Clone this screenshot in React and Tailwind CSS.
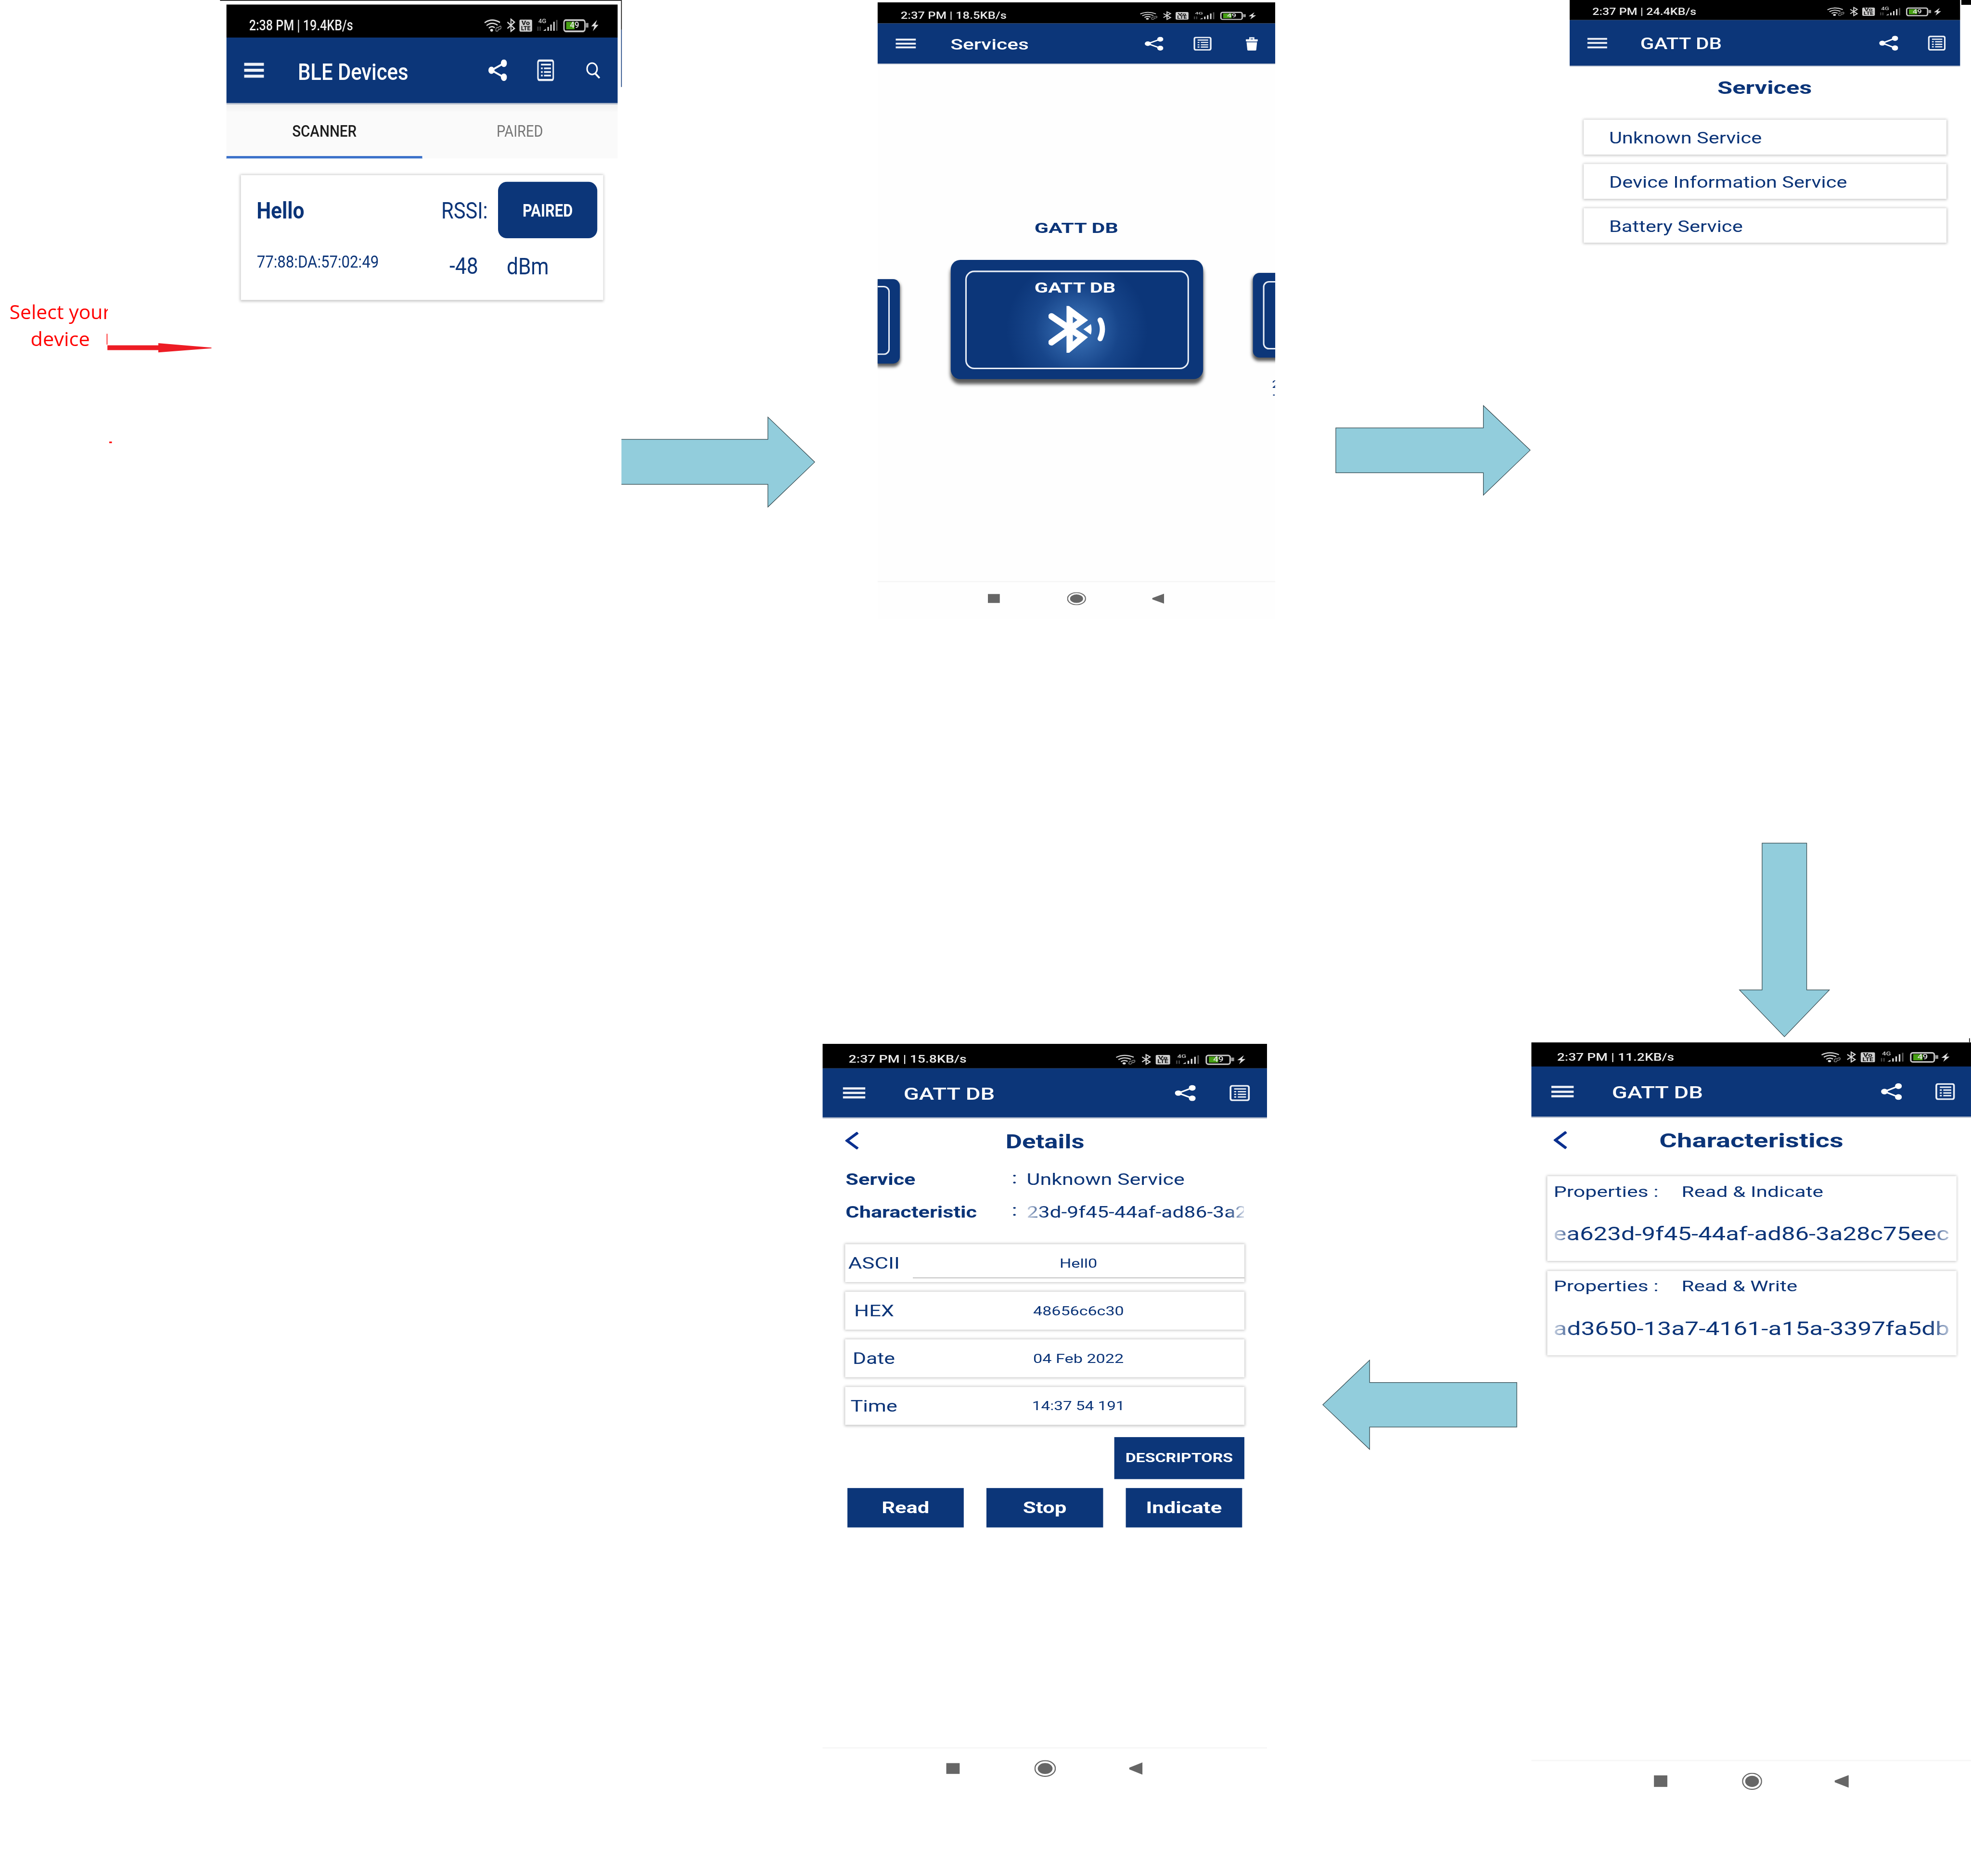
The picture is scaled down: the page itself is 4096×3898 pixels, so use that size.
import React, { useLayoutEffect, useRef, useState } from "react";

/* One line of text, stretched horizontally so that its ink fills the width of its box. */
function Fit({ className = "", children }) {
  const box = useRef(null);
  const line = useRef(null);
  const [fit, setFit] = useState({ ratio: 1, shift: 0 });
  useLayoutEffect(() => {
    const size = parseFloat(getComputedStyle(line.current).fontSize);
    const ratio = box.current.clientWidth / (line.current.offsetWidth - size * 0.08);
    setFit({ ratio, shift: -size * 0.05 * ratio });
  }, [children]);
  return (
    <div ref={box} className={"shrink-0 " + className}>
      <span
        ref={line}
        className="block w-max origin-left whitespace-pre"
        style={{ transform: `translateX(${fit.shift}px) scaleX(${fit.ratio})` }}
      >
        {children}
      </span>
    </div>
  );
}

function StatusIcons({ className }) {
  return (
    <svg className={className} viewBox="0 0 1040 94" preserveAspectRatio="none" fill="none">
      <g stroke="#d6d6d6" strokeWidth="9">
        <path d="M6 30Q70 -4 146 28" />
        <path d="M24 49Q70 20 124 46" />
        <path d="M44 66Q70 48 98 63" />
      </g>
      <ellipse cx="70" cy="80" rx="13" ry="9" fill="#e2e2e2" />
      <path d="M108 84q-4-26 22-22q26-18 26 0q-2 12-24 12q-4 18-24 10z" stroke="#7d7d7d" strokeWidth="7" />
      <path d="M213 26L277 68L245 87V7L277 26L213 68" stroke="#d6d6d6" strokeWidth="9" />
      <rect x="322" y="9" width="115" height="80" rx="10" fill="#cfcfcf" />
      <text x="379" y="44" textAnchor="middle" textLength="76" lengthAdjust="spacingAndGlyphs" fontFamily="Roboto" fontWeight="900" fontSize="40" fill="#222">Vo</text>
      <text x="379" y="80" textAnchor="middle" textLength="86" lengthAdjust="spacingAndGlyphs" fontFamily="Roboto" fontWeight="900" fontSize="42" fill="#222">LTE</text>
      <text x="494" y="33" textLength="72" lengthAdjust="spacingAndGlyphs" fontFamily="Roboto" fontWeight="500" fontSize="40" fill="#d0d0d0">4G</text>
      <path d="M490 56v28M510 56v28" stroke="#4a4a4a" strokeWidth="10" />
      <path d="M538 84L562 70V84zM576 84V58h13v26zM602 84V42h13v42zM629 84V24h13v60z" fill="#d9d9d9" />
      <path d="M655 84V12h12v72z" fill="#5a5a5a" />
      <rect x="726" y="13" width="190" height="74" rx="16" stroke="#c8c8c8" strokeWidth="12" />
      <rect x="746" y="24" width="76" height="50" fill="#46a013" />
      <path d="M924 32h24v30h-24z" fill="#9a9a9a" />
      <text x="780" y="66" textLength="84" lengthAdjust="spacingAndGlyphs" fontFamily="Roboto" fontWeight="500" fontSize="56" fill="#e4e4e4">49</text>
      <path d="M1026 12L973 54H1002L988 86L1039 44H1010z" fill="#dedede" />
    </svg>
  );
}

function ShareIcon({ className }) {
  return (
    <svg className={className} viewBox="0 0 170 138" preserveAspectRatio="none">
      <path d="M142 24L28 69L142 114" fill="none" stroke="#fff" strokeWidth="13" />
      <ellipse cx="28" cy="69" rx="28" ry="23" fill="#fff" />
      <ellipse cx="142" cy="24" rx="28" ry="24" fill="#fff" />
      <ellipse cx="142" cy="114" rx="28" ry="24" fill="#fff" />
    </svg>
  );
}

function ListIcon({ className }) {
  return (
    <svg className={className} viewBox="0 0 158 134" preserveAspectRatio="none" fill="none" stroke="#eef2f8">
      <rect x="8" y="6" width="142" height="122" rx="14" strokeWidth="14" />
      <path strokeWidth="11" d="M36 32H128M36 55h16M64 55h64M36 78h16M64 78h64M36 100h16M64 100h64" />
    </svg>
  );
}

function SearchIcon({ className }) {
  return (
    <svg className={className} viewBox="0 0 38 44" preserveAspectRatio="none" fill="none" stroke="#fff">
      <ellipse cx="16" cy="18" rx="13.5" ry="15.5" strokeWidth="4" />
      <path d="M24 30L36 43" strokeWidth="5" />
    </svg>
  );
}

function TrashIcon({ className }) {
  return (
    <svg className={className} viewBox="0 0 34 37" preserveAspectRatio="none">
      <path d="M12 8V3h10v5" fill="none" stroke="#e6ebf3" strokeWidth="4" />
      <path d="M1 7h32v5H1z" fill="#fff" />
      <path d="M3 13h28v3H3z" fill="#a9b8d2" />
      <path d="M3 16h28L29 35q0 2-3 2H8q-3 0-3-2z" fill="#fff" />
    </svg>
  );
}

function Burger({ className, bar }) {
  return (
    <div className={"ml-[4.6%] flex w-[5%] shrink-0 flex-col justify-between " + className}>
      <div className={"bg-[#eef1f7] " + bar} />
      <div className={"bg-[#eef1f7] " + bar} />
      <div className={"bg-[#eef1f7] " + bar} />
    </div>
  );
}

function StatusBar({ className, time, timeClass, iconsClass }) {
  return (
    <div className={"flex shrink-0 items-center bg-black " + className}>
      <Fit className={"ml-[6%] w-[26.35%] font-medium text-[#ececec] " + timeClass}>{time}</Fit>
      <StatusIcons className={"ml-[33.5%] w-[29.3%] shrink-0 " + iconsClass} />
    </div>
  );
}

function BackButton({ className }) {
  return (
    <svg className={"shrink-0 " + className} viewBox="0 0 37 48" preserveAspectRatio="none">
      <path d="M34 2L5 24L34 46" fill="none" stroke="#0a2f8f" strokeWidth="7.5" />
    </svg>
  );
}

function NavBar({ className, square, circle, triangle }) {
  return (
    <div className={"flex w-full items-center " + className}>
      <div className={"shrink-0 bg-[#666] " + square} />
      <svg className={"shrink-0 " + circle} viewBox="0 0 54 46" preserveAspectRatio="none">
        <ellipse cx="27" cy="23" rx="25.5" ry="21.5" fill="none" stroke="#666" strokeWidth="3" />
        <ellipse cx="27" cy="23" rx="18.5" ry="15" fill="#666" />
      </svg>
      <svg className={"shrink-0 " + triangle} viewBox="0 0 36 32" preserveAspectRatio="none">
        <path d="M36 0V32L0 18V14z" fill="#666" />
      </svg>
    </div>
  );
}

const card = "bg-white shadow-[0_1px_7px_2px_rgba(0,0,0,0.25)]";

function BleDevices() {
  return (
    <section className="absolute left-[609px] top-[12px] flex h-[860px] w-[1053px] flex-col overflow-hidden bg-white">
      <StatusBar className="h-[89px] pt-[22px]" time="2:38 PM | 19.4KB/s" timeClass="text-[41px] leading-[29px]" iconsClass="h-[38px]" />
      <div className="flex h-[176px] shrink-0 items-center bg-[#0c3679]">
        <Burger className="h-[40px]" bar="h-[8px]" />
        <Fit className="ml-[94px] mt-[8px] w-[293px] text-[63px] font-medium leading-[45px] text-white">BLE Devices</Fit>
        <ShareIcon className="ml-[217px] h-[58px] w-[50px]" />
        <ListIcon className="ml-[81px] h-[58px] w-[46px]" />
        <SearchIcon className="ml-[86px] h-[44px] w-[38px]" />
      </div>
      <div className="h-[4px] shrink-0 bg-[#b4bccb]" />
      <div className="flex h-[145px] shrink-0 bg-gradient-to-b from-[#f0f0f0] to-[#fafafa] to-15%">
        <div className="flex w-[527px] justify-center pt-[58px]">
          <Fit className="w-[170px] text-[42px] font-medium leading-[30px] text-[#1c1c1c]">SCANNER</Fit>
        </div>
        <div className="flex flex-1 justify-center pt-[58px]">
          <Fit className="w-[122px] text-[42px] leading-[30px] text-[#757575]">PAIRED</Fit>
        </div>
      </div>
      <div className="-mt-[6px] h-[7px] w-[527px] shrink-0 border-b-2 border-[#a9c3ea] bg-[#2a65c5]" />
      <div className={"ml-[39px] mt-[44px] flex h-[336px] w-[975px] shrink-0 text-[#0b3478] " + card}>
        <div className="ml-[45px] w-[497px]">
          <Fit className="mt-[74px] w-[124px] text-[62px] font-bold leading-[44px]">Hello</Fit>
          <Fit className="mt-[99px] w-[325px] text-[46px] leading-[33px]">77:88:DA:57:02:49</Fit>
        </div>
        <div className="w-[150px]">
          <Fit className="mt-[74px] w-[121px] text-[62px] leading-[44px]">RSSI:</Fit>
          <Fit className="ml-[22px] mt-[105px] w-[73px] text-[62px] leading-[44px]">-48</Fit>
        </div>
        <div>
          <button className="mt-[18px] flex h-[152px] w-[267px] items-center justify-center rounded-[24px] bg-[#0c3679]">
            <Fit className="w-[132px] text-[49px] font-bold leading-[35px] text-white">PAIRED</Fit>
          </button>
          <Fit className="ml-[26px] mt-[54px] w-[109px] text-[62px] leading-[44px]">dBm</Fit>
        </div>
      </div>
    </section>
  );
}

function SideCard({ className, inner }) {
  return (
    <div className={"shrink-0 bg-[#0c3679] shadow-[0_7px_8px_1px_rgba(0,0,0,0.65)] " + className}>
      <div className={"border-[4px] border-[#e9eef6] " + inner} />
    </div>
  );
}

function Services() {
  return (
    <section className="absolute left-[2361px] top-[6px] flex h-[1660px] w-[1070px] flex-col overflow-hidden bg-[#fefefe]">
      <StatusBar className="h-[57px] pt-[15px]" time="2:37 PM | 18.5KB/s" timeClass="text-[26px] leading-[18px]" iconsClass="h-[24px]" />
      <div className="flex h-[108px] shrink-0 items-center bg-[#0c3679]">
        <Burger className="h-[26px]" bar="h-[5px]" />
        <Fit className="ml-[96px] mt-[6px] w-[206px] text-[39.5px] font-medium leading-[28px] text-white">Services</Fit>
        <ShareIcon className="ml-[314px] h-[37px] w-[50px]" />
        <ListIcon className="ml-[81px] h-[37px] w-[49px]" />
        <TrashIcon className="ml-[91px] h-[37px] w-[34px]" />
      </div>
      <div className="h-[2px] shrink-0 bg-[#b4bccb]" />
      <Fit className="ml-[425px] mt-[428px] w-[221px] text-[38px] font-bold leading-[27px] text-[#0b3478]">GATT DB</Fit>
      <div className="mt-[71px] flex h-[321px] shrink-0">
        <SideCard className="mt-[52px] h-[227px] w-[60px] rounded-r-[18px] pt-[18px]" inner="h-[186px] w-[33px] rounded-r-[16px] border-l-0" />
        <div className="ml-[137px] flex h-[321px] w-[679px] shrink-0 flex-col items-center rounded-[26px] bg-[#0c3679] pt-[29px] shadow-[0_12px_10px_1px_rgba(0,0,0,0.65)]">
          <div className="flex h-[265px] w-[602px] flex-col items-center rounded-[24px] border-[4px] border-[#e9eef6] bg-[radial-gradient(circle_190px_at_50%_60%,#3d74b8_0%,#2f63a8_25%,#17458a_60%,#0c3679_100%)] pt-[29px]">
            <Fit className="mr-[9px] w-[214px] text-[38px] font-bold leading-[27px] text-white">GATT DB</Fit>
            <svg className="mt-[35px] h-[126px] w-[153px]" viewBox="0 0 153 126">
              <path d="M8 28L92 85L57 114V12L92 38L8 98" fill="none" stroke="#fff" strokeWidth="17" strokeLinecap="round" />
              <path d="M94 63L114 49Q118 63 114 77z" fill="#fff" />
              <path d="M139 38Q151 62 139 88" fill="none" stroke="#fff" strokeWidth="14" strokeLinecap="round" />
            </svg>
          </div>
        </div>
        <div className="ml-[134px] shrink-0">
          <SideCard className="mt-[35px] h-[228px] w-[90px] rounded-l-[18px] pl-[27px] pt-[22px]" inner="h-[184px] w-[80px] rounded-l-[16px]" />
        </div>
      </div>
      <div className="mt-[4px] h-[44px] shrink-0 pl-[1063px] text-[#0b3478]">
        <Fit className="w-[20px] text-[28px] leading-[20px]">2</Fit>
        <Fit className="mt-[1px] w-[8px] text-[28px] leading-[20px]">.</Fit>
      </div>
      <div className="mt-[495px] h-[3px] shrink-0 bg-[#f5f5f5]" />
      <NavBar className="h-[88px]" square="ml-[297px] h-[24px] w-[32px]" circle="ml-[181px] h-[35px] w-[51px]" triangle="ml-[178px] h-[27px] w-[32px]" />
    </section>
  );
}

function GattServices() {
  return (
    <section className="absolute left-[4223px] top-0 flex h-[700px] w-[1051px] flex-col overflow-hidden bg-white">
      <StatusBar className="h-[54px] pt-[8px]" time="2:37 PM | 24.4KB/s" timeClass="text-[27px] leading-[19px]" iconsClass="h-[26px]" />
      <div className="flex h-[123px] shrink-0 items-center bg-[#0c3679]">
        <Burger className="h-[28px]" bar="h-[5px]" />
        <Fit className="ml-[92px] mt-[5px] w-[215px] text-[42px] font-medium leading-[30px] text-white">GATT DB</Fit>
        <ShareIcon className="ml-[425px] h-[40px] w-[51px]" />
        <ListIcon className="ml-[80px] h-[40px] w-[48px]" />
      </div>
      <div className="h-[2px] shrink-0 bg-[#b4bccb]" />
      <Fit className="ml-[401px] mt-[40px] w-[249px] text-[49px] font-bold leading-[35px] text-[#0b3478]">Services</Fit>
      <div className="ml-[38px] mt-[68px] flex w-[976px] flex-col gap-[25px] text-[42px] leading-[30px] text-[#0b3478]">
        <div className={"h-[94px] pl-[71px] pt-[35px] " + card}>
          <Fit className="w-[407px]">Unknown Service</Fit>
        </div>
        <div className={"h-[94px] pl-[71px] pt-[35px] " + card}>
          <Fit className="w-[636px]">Device Information Service</Fit>
        </div>
        <div className={"h-[93px] pl-[71px] pt-[35px] " + card}>
          <Fit className="w-[355px]">Battery Service</Fit>
        </div>
      </div>
    </section>
  );
}

function PropertyCard({ className, mode, modeClass, uuid }) {
  return (
    <div className={"w-[1101px] shrink-0 pl-[20px] text-[#0b3478] " + card + " " + className}>
      <div className="flex text-[41px] leading-[29px]">
        <Fit className="w-[278px]">Properties :</Fit>
        <Fit className={"ml-[66px] " + modeClass}>{mode}</Fit>
      </div>
      <div className="mt-[73px] w-[1060px] py-[8px] [mask-image:linear-gradient(to_right,rgba(0,0,0,0.25),black_5%,black_95%,rgba(0,0,0,0.3))]">
        <Fit className="w-[1060px] text-[51px] leading-[36px]">{uuid}</Fit>
      </div>
    </div>
  );
}

function Characteristics() {
  return (
    <section className="absolute left-[4120px] top-[2804px] flex h-[2100px] w-[1183px] flex-col overflow-hidden bg-white">
      <StatusBar className="h-[65px] pt-[13px]" time="2:37 PM | 11.2KB/s" timeClass="text-[29px] leading-[20px]" iconsClass="h-[31px]" />
      <div className="flex h-[135px] shrink-0 items-center bg-[#0c3679]">
        <Burger className="h-[31px]" bar="h-[6px]" />
        <Fit className="ml-[106px] mt-[4px] w-[240px] text-[46px] font-medium leading-[33px] text-white">GATT DB</Fit>
        <ShareIcon className="ml-[481px] h-[45px] w-[56px]" />
        <ListIcon className="ml-[90px] h-[45px] w-[53px]" />
      </div>
      <div className="h-[3px] shrink-0 bg-[#b4bccb]" />
      <div className="mt-[36px] flex h-[48px] shrink-0 items-center">
        <BackButton className="ml-[60px] h-[48px] w-[37px]" />
        <Fit className="ml-[251px] mt-[4px] w-[490px] text-[53.5px] font-bold leading-[38px] text-[#0b3478]">Characteristics</Fit>
      </div>
      <div className="ml-[43px] mt-[73px] flex flex-col gap-[27px]">
        <PropertyCard className="h-[228px] pt-[28px]" mode="Read & Indicate" modeClass="w-[377px]" uuid="ea623d-9f45-44af-ad86-3a28c75eec" />
        <PropertyCard className="h-[227px] pt-[27px]" mode="Read & Write" modeClass="w-[307px]" uuid="ad3650-13a7-4161-a15a-3397fa5db" />
      </div>
      <div className="mt-[1088px] h-[4px] shrink-0 bg-[#f7f7f7]" />
      <NavBar className="h-[107px]" square="ml-[330px] h-[31px] w-[36px]" circle="ml-[201px] h-[46px] w-[54px]" triangle="ml-[195px] h-[34px] w-[38px]" />
    </section>
  );
}

function DetailRow({ className = "", label, labelClass, value, valueClass, underline }) {
  return (
    <div className={"relative flex h-[102px] shrink-0 items-center text-[#0b3478] " + card + " " + className}>
      <div className="flex w-[156px] shrink-0 justify-center">
        <Fit className={"text-[43.5px] leading-[31px] " + labelClass}>{label}</Fit>
      </div>
      <div className="flex w-[918px] shrink-0 justify-center pl-[26px]">
        <Fit className={"text-[34px] leading-[24px] " + valueClass}>{value}</Fit>
      </div>
      {underline && <div className="absolute bottom-[9px] right-0 h-[4px] w-[892px] border-t-2 border-[#c4c4c4] bg-[#e8e8e8]" />}
    </div>
  );
}

function Details() {
  return (
    <section className="absolute left-[2213px] top-[2808px] flex h-[2050px] w-[1196px] flex-col overflow-hidden bg-white">
      <StatusBar className="h-[66px] pt-[17px]" time="2:37 PM | 15.8KB/s" timeClass="text-[28px] leading-[20px]" iconsClass="h-[30px]" />
      <div className="flex h-[132px] shrink-0 items-center bg-[#0c3679]">
        <Burger className="h-[30px]" bar="h-[6px]" />
        <Fit className="ml-[106px] mt-[5px] w-[241px] text-[46px] font-medium leading-[33px] text-white">GATT DB</Fit>
        <ShareIcon className="ml-[486px] h-[43px] w-[56px]" />
        <ListIcon className="ml-[91px] h-[43px] w-[55px]" />
      </div>
      <div className="h-[3px] shrink-0 bg-[#b4bccb]" />
      <div className="mt-[36px] flex h-[47px] shrink-0 items-center">
        <BackButton className="ml-[61px] h-[47px] w-[37px]" />
        <Fit className="ml-[398px] mt-[4px] w-[207px] text-[53px] font-bold leading-[38px] text-[#0b3478]">Details</Fit>
      </div>
      <div className="ml-[65px] mt-[66px] flex shrink-0 text-[42px] leading-[29px] text-[#0b3478]">
        <Fit className="w-[183px] font-bold">Service</Fit>
        <Fit className="ml-[264px] w-[10px] -translate-y-[4px]">:</Fit>
        <Fit className="ml-[30px] w-[421px]">Unknown Service</Fit>
      </div>
      <div className="ml-[65px] mt-[51px] flex h-[46px] shrink-0 pt-[8px] text-[42px] leading-[30px] text-[#0b3478]">
        <Fit className="w-[349px] font-bold">Characteristic</Fit>
        <Fit className="ml-[98px] w-[10px] -translate-y-[4px]">:</Fit>
        <div className="-mt-[8px] ml-[30px] w-[582px] overflow-hidden py-[8px] [mask-image:linear-gradient(to_right,rgba(0,0,0,0.25),black_8%,black_92%,rgba(0,0,0,0.2))]">
          <Fit className="w-[588px]">23d-9f45-44af-ad86-3a2</Fit>
        </div>
      </div>
      <div className="ml-[61px] mt-[63px] flex w-[1074px] shrink-0 flex-col gap-[26px]">
        <DetailRow label="ASCII" labelClass="w-[134px]" value="Hell0" valueClass="w-[98px]" underline />
        <DetailRow label="HEX" labelClass="w-[103px]" value="48656c6c30" valueClass="w-[240px]" />
        <DetailRow label="Date" labelClass="w-[110px]" value="04 Feb 2022" valueClass="w-[240px]" />
        <DetailRow label="Time" labelClass="w-[122px]" value="14:37 54 191" valueClass="w-[246px]" />
      </div>
      <button className="ml-[785px] mt-[33px] flex h-[113px] w-[350px] shrink-0 items-center justify-center bg-[#0c3679]">
        <Fit className="w-[286px] text-[32.5px] font-bold leading-[23px] text-white">DESCRIPTORS</Fit>
      </button>
      <div className="ml-[67px] mt-[24px] flex shrink-0 gap-[61px] text-[42px] font-bold leading-[30px] text-white">
        <button className="flex h-[106px] w-[313px] items-center justify-center bg-[#0c3679]">
          <Fit className="w-[124px]">Read</Fit>
        </button>
        <button className="flex h-[106px] w-[314px] items-center justify-center bg-[#0c3679]">
          <Fit className="w-[113px]">Stop</Fit>
        </button>
        <button className="flex h-[106px] w-[313px] items-center justify-center bg-[#0c3679]">
          <Fit className="w-[200px]">Indicate</Fit>
        </button>
      </div>
      <div className="mt-[591px] h-[4px] shrink-0 bg-[#f7f7f7]" />
      <NavBar className="h-[107px]" square="ml-[333px] h-[29px] w-[36px]" circle="ml-[201px] h-[45px] w-[58px]" triangle="ml-[197px] h-[33px] w-[36px]" />
    </section>
  );
}

/* Block arrows that join one screen to the next. */
function FlowArrows() {
  return (
    <svg className="absolute left-0 top-0 h-[5047px] w-[5303px]" viewBox="0 0 5303 5047">
      <g fill="#92cddc" stroke="#33464b" strokeWidth="1.6">
        <path d="M1672 1182H2066V1122L2192 1243L2066 1364V1303H1672" />
        <path d="M3594 1151H3991V1091L4117 1211L3991 1332V1272H3594z" />
        <path d="M4741 2268H4861V2663H4922L4801 2789L4680 2663H4741z" />
        <path d="M4081 3719H3685V3659L3559 3779L3685 3899V3839H4081z" />
      </g>
      <path d="M289 929H426V923L569 935V937L426 948V942H289z" fill="#ed1c24" />
      <path d="M287 898h2v29h-2zM294 1188h7v4h-7z" fill="#f00" />
    </svg>
  );
}

function Callout() {
  return (
    <div className="absolute left-[28px] top-[812px] w-[262px] overflow-hidden pb-[14px] pt-[8px] font-['Open_Sans',sans-serif] text-[52px] leading-[38px] text-[#f00]">
      <Fit className="w-[268px]">Select your</Fit>
      <Fit className="ml-[57px] mt-[34px] w-[155px]">device</Fit>
    </div>
  );
}

export default function App() {
  return (
    <main className="h-[3898px] w-[4096px] overflow-hidden bg-white font-['Roboto',sans-serif]">
      <div className="relative h-[5047px] w-[5303px] origin-top-left scale-[0.77239] bg-white">
        <div className="absolute left-[592px] top-0 h-[235px] w-[1081px] border-t-2 border-black">
          <div className="ml-auto h-[78px] w-[2px] bg-black" />
          <div className="ml-auto h-[154px] w-[2px] bg-[#0c3679]" />
        </div>
        <div className="absolute left-[5277px] top-0 h-[13px] w-[26px] bg-black" />
        <div className="absolute left-[5298px] top-[2793px] h-[11px] w-[2px] bg-black" />
        <Callout />
        <BleDevices />
        <Services />
        <GattServices />
        <Characteristics />
        <Details />
        <FlowArrows />
      </div>
    </main>
  );
}
